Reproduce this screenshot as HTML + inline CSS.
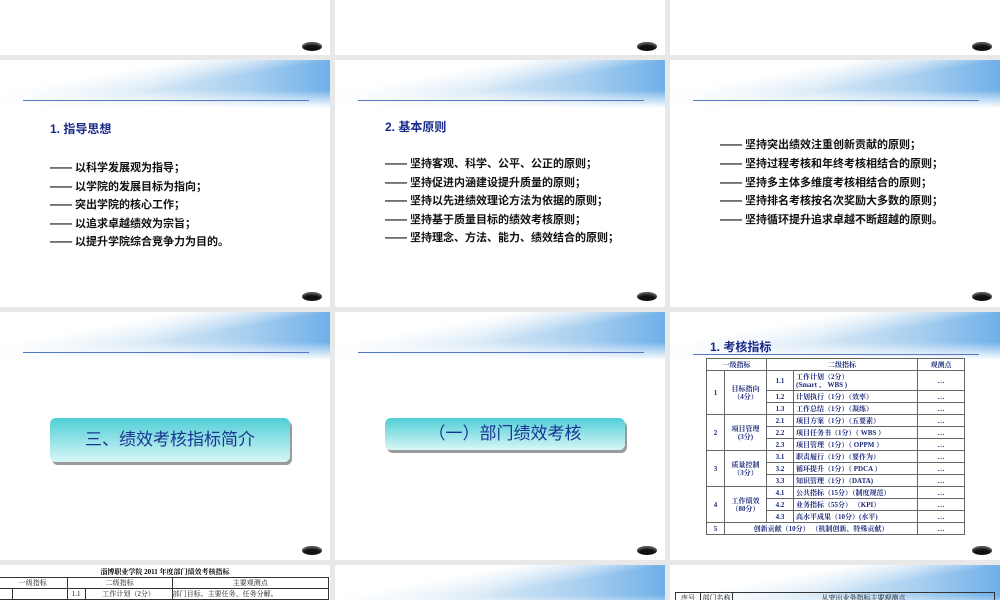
<!DOCTYPE html>
<html><head><meta charset="utf-8"><style>
*{margin:0;padding:0;box-sizing:border-box}
body{width:1000px;height:600px;background:#e8e8e8;position:relative;overflow:hidden;font-family:"Liberation Sans","Noto Sans CJK SC",sans-serif}
.s{position:absolute;background:#fff;overflow:hidden;width:330px}
.g{position:absolute;left:0;top:0;width:330px;height:48px;background:linear-gradient(170deg,#fff 0%,#fff 30%,rgba(255,255,255,0) 55%),linear-gradient(90deg,#eef5fb 0%,#d6e8f6 45%,#a9cff0 75%,#6fb0e8 100%)}
.g:after{content:"";position:absolute;left:0;top:30px;width:330px;height:18px;background:linear-gradient(180deg,rgba(255,255,255,0),#fff)}
.ln{position:absolute;left:23px;width:286px;height:1px;background:#5577c4;top:40px}
.pg{position:absolute;left:302px;width:20px;height:9px;border-radius:50%;background:#111;box-shadow:inset 0 2px 2px #666}
.t{position:absolute;left:50px;font-size:11px;font-weight:bold;color:#111;white-space:nowrap}
.h{position:absolute;left:50px;font-size:12px;font-weight:bold;color:#1a2a8a}
.btn{position:absolute;left:50px;width:240px;border-radius:6px;background:linear-gradient(180deg,#4fcfd6,#d8f6f6);box-shadow:2px 3px 0 #9a9a9a;color:#1c3490;font-size:17px;text-align:center}
table{border-collapse:collapse}
.k td{border:1px solid #666;font-size:7px;line-height:8px;color:#1c2a7a;font-weight:bold;text-align:center;height:12px;padding:0 2px;font-family:"Liberation Serif","Noto Serif CJK SC",serif;white-space:nowrap}
.k td.l{text-align:left}
.q td{border:1px solid #333;font-size:7px;color:#111;height:10px;text-align:center;font-family:"Liberation Serif","Noto Serif CJK SC",serif}
</style></head><body>

<div class="s" style="left:0;top:0;height:55px"><div class="pg" style="top:42px"></div></div>
<div class="s" style="left:335px;top:0;height:55px"><div class="pg" style="top:42px"></div></div>
<div class="s" style="left:670px;top:0;height:55px"><div class="pg" style="top:42px"></div></div>

<div class="s" style="left:0;top:60px;height:247px"><div class="g"></div><div class="ln"></div>
<div class="h" style="top:60px">1. 指导思想</div>
<div class="t" style="top:99px">—— 以科学发展观为指导；</div>
<div class="t" style="top:118px">—— 以学院的发展目标为指向；</div>
<div class="t" style="top:136px">—— 突出学院的核心工作；</div>
<div class="t" style="top:155px">—— 以追求卓越绩效为宗旨；</div>
<div class="t" style="top:173px">—— 以提升学院综合竞争力为目的。</div>
<div class="pg" style="top:232px"></div></div>

<div class="s" style="left:335px;top:60px;height:247px"><div class="g"></div><div class="ln"></div>
<div class="h" style="top:58px">2. 基本原则</div>
<div class="t" style="top:95px">—— 坚持客观、科学、公平、公正的原则；</div>
<div class="t" style="top:114px">—— 坚持促进内涵建设提升质量的原则；</div>
<div class="t" style="top:132px">—— 坚持以先进绩效理论方法为依据的原则；</div>
<div class="t" style="top:151px">—— 坚持基于质量目标的绩效考核原则；</div>
<div class="t" style="top:169px">—— 坚持理念、方法、能力、绩效结合的原则；</div>
<div class="pg" style="top:232px"></div></div>

<div class="s" style="left:670px;top:60px;height:247px"><div class="g"></div><div class="ln"></div>
<div class="t" style="top:76px">—— 坚持突出绩效注重创新贡献的原则；</div>
<div class="t" style="top:95px">—— 坚持过程考核和年终考核相结合的原则；</div>
<div class="t" style="top:114px">—— 坚持多主体多维度考核相结合的原则；</div>
<div class="t" style="top:132px">—— 坚持排名考核按名次奖励大多数的原则；</div>
<div class="t" style="top:151px">—— 坚持循环提升追求卓越不断超越的原则。</div>
<div class="pg" style="top:232px"></div></div>

<div class="s" style="left:0;top:312px;height:248px"><div class="g"></div><div class="ln"></div>
<div class="btn" style="top:106px;height:44px;line-height:44px">三、绩效考核指标简介</div>
<div class="pg" style="top:234px"></div></div>

<div class="s" style="left:335px;top:312px;height:248px"><div class="g"></div><div class="ln"></div>
<div class="btn" style="top:106px;height:32px;line-height:32px">（一）部门绩效考核</div>
<div class="pg" style="top:234px"></div></div>

<div class="s" style="left:670px;top:312px;height:248px"><div class="g"></div>
<div class="h" style="left:40px;top:26px">1. 考核指标</div>
<div class="ln" style="top:42px"></div>
<table class="k" style="position:absolute;left:36px;top:46px;width:259px;table-layout:fixed">
<colgroup><col style="width:18px"><col style="width:42px"><col style="width:27px"><col><col style="width:47px"></colgroup>
<tr><td colspan="2">一级指标</td><td colspan="2">二级指标</td><td>观测点</td></tr>
<tr><td rowspan="3">1</td><td rowspan="3">目标指向<br>（4分）</td><td>1.1</td><td class="l" style="height:20px">工作计划（2分）<br>(Smart 、 WBS )</td><td>…</td></tr>
<tr><td>1.2</td><td class="l">计划执行（1分）（效率）</td><td>…</td></tr>
<tr><td>1.3</td><td class="l">工作总结（1分）（凝练）</td><td>…</td></tr>
<tr><td rowspan="3">2</td><td rowspan="3">项目管理<br>(3分)</td><td>2.1</td><td class="l">项目方案（1分）（五要素）</td><td>…</td></tr>
<tr><td>2.2</td><td class="l">项目任务书（1分）（ WBS ）</td><td>…</td></tr>
<tr><td>2.3</td><td class="l">项目管理（1分）（ OPPM ）</td><td>…</td></tr>
<tr><td rowspan="3">3</td><td rowspan="3">质量控制<br>（3分）</td><td>3.1</td><td class="l">职责履行（1分）（要作为）</td><td>…</td></tr>
<tr><td>3.2</td><td class="l">循环提升（1分）（ PDCA ）</td><td>…</td></tr>
<tr><td>3.3</td><td class="l">知识管理（1分）（DATA)</td><td>…</td></tr>
<tr><td rowspan="3">4</td><td rowspan="3">工作绩效<br>（80分）</td><td>4.1</td><td class="l">公共指标（15分）（制度规范）</td><td>…</td></tr>
<tr><td>4.2</td><td class="l">业务指标（55分） （KPI）</td><td>…</td></tr>
<tr><td>4.3</td><td class="l">高水平成果（10分）(水平)</td><td>…</td></tr>
<tr><td>5</td><td colspan="3">创新贡献（10分） （机制创新、特殊贡献）</td><td>…</td></tr>
</table>
<div class="pg" style="top:234px"></div></div>

<div class="s" style="left:0;top:565px;height:35px">
<div style="position:absolute;left:0;top:2px;width:330px;text-align:center;font-size:7px;font-weight:bold;font-family:'Liberation Serif','Noto Serif CJK SC',serif">淄博职业学院 2011 年度部门绩效考核指标</div>
<table class="q" style="position:absolute;left:-2px;top:12px;width:331px">
<tr><td colspan="2" style="width:51px">一级指标</td><td colspan="2" style="width:77px">二级指标</td><td>主要观测点</td></tr>
<tr><td style="width:14px"></td><td></td><td style="width:18px">1.1</td><td>工作计划（2分）</td><td style="text-align:left">部门目标、主要任务、任务分解。</td></tr>
</table></div>

<div class="s" style="left:335px;top:565px;height:35px"><div class="g"></div></div>
<div class="s" style="left:670px;top:565px;height:35px"><div class="g"></div>
<table class="q" style="position:absolute;left:5px;top:27px;width:320px">
<tr><td style="width:25px">序号</td><td style="width:32px">部门名称</td><td>从突出业务指标主要观测点</td></tr></table></div>
</body></html>
